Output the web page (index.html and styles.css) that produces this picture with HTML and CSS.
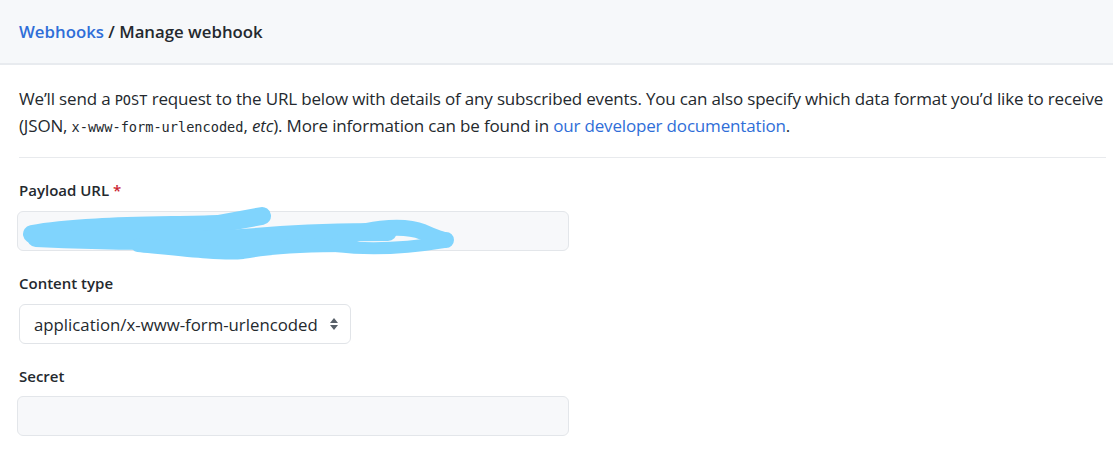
FILE: index.html
```html
<!DOCTYPE html>
<html lang="en">
<head>
<meta charset="utf-8">
<title>Manage webhook</title>
<link rel="stylesheet" href="styles.css">
</head>
<body>
<div class="box">
  <div class="box-header">
    <h2 class="crumbs"><a href="#" class="link">Webhooks</a> / Manage webhook</h2>
  </div>
  <div class="box-body">
    <p class="intro">We’ll send a <code>POST</code> request to the URL below with details of any subscribed events. You can also specify which data format you’d like to receive (JSON, <code>x-www-form-urlencoded</code>, <em>etc</em>). More information can be found in <a href="#" class="link">our developer documentation</a>.</p>
    <hr class="rule">
    <div class="field">
      <label class="label">Payload URL <span class="req">*</span></label>
      <div class="input input-wide input-fill">
        <svg class="scribble" width="440" height="50" viewBox="0 0 440 50">
          <g fill="none" stroke="#80d4fd" stroke-linecap="round" stroke-linejoin="round">
            <path d="M14 22 C60 13 140 14 200 12 L244 4" stroke-width="18"/>
            <path d="M18 26 C100 30 180 30 250 24 C300 20 340 20 370 20" stroke-width="18"/>
            <path d="M120 33 C170 38 205 42 225 40 C250 35 290 33 330 33" stroke-width="14"/>
            <path d="M322 30 C340 16 385 12 405 20 C418 26 426 28 428 28" stroke-width="16"/>
            <path d="M318 34 C350 38 390 36 426 30" stroke-width="12"/>
          </g>
        </svg>
      </div>
    </div>
    <div class="field">
      <label class="label">Content type</label>
      <div class="select">
        <span>application/x-www-form-urlencoded</span>
        <svg class="caret" width="8" height="12" viewBox="0 0 8 12"><path d="M4 0 L8 5 H0 Z M0 7 H8 L4 12 Z" fill="#586069"/></svg>
      </div>
    </div>
    <div class="field">
      <label class="label">Secret</label>
      <div class="input input-wide input-fill"></div>
    </div>
  </div>
</div>
</body>
</html>
```

FILE: styles.css
```css
html, body {
  margin: 0;
  padding: 0;
  background: #ffffff;
}
body {
  font-family: "Open Sans", "Noto Sans", sans-serif;
  color: #24292e;
  font-size: 17px;
}
.box {
  width: 1113px;
}
.box-header {
  background: #f6f8fa;
  border-bottom: 2px solid #e8ebef;
  height: 65px;
  display: flex;
  align-items: center;
  padding: 2px 19px 0;
  box-sizing: border-box;
}
.crumbs {
  margin: 0;
  font-size: 16.8px;
  font-weight: 600;
  color: #24292e;
  line-height: 1;
}
.link {
  color: #2f6ed8;
  text-decoration: none;
}
.box-body {
  padding: 0 5px 0 19px;
}
.intro {
  margin: 21px 0 0;
  line-height: 25px;
  letter-spacing: -0.17px;
}
.intro code {
  font-family: "DejaVu Sans Mono", "Liberation Mono", monospace;
  font-size: 13.6px;
  letter-spacing: 0;
}
.rule {
  border: 0;
  border-top: 1px solid #e8eaed;
  margin: 17px 2px 0 0;
}
.field {
  display: flex;
  flex-direction: column;
}
.label {
  font-weight: 600;
  font-size: 15px;
  line-height: 20px;
  margin: 22px 0 11px;
}
.field + .field .label {
  margin-top: 22px;
}
.field:last-child .label {
  margin-bottom: 10px;
}
.req {
  color: #cb2431;
}
.input {
  box-sizing: border-box;
  height: 40px;
  border: 1px solid #e3e6ea;
  border-radius: 6px;
  position: relative;
}
.input-wide {
  width: 552px;
  margin-left: -2px;
}
.input-fill {
  background: #f7f8fa;
}
.scribble {
  position: absolute;
  left: 0;
  top: 0;
  overflow: visible;
}
.select {
  box-sizing: border-box;
  width: 332px;
  height: 40px;
  border: 1px solid #e1e4e8;
  border-radius: 6px;
  display: flex;
  align-items: center;
  justify-content: space-between;
  padding: 0 12px 0 14px;
  font-size: 16.8px;
  color: #24292e;
}
.caret {
  display: block;
}
```
